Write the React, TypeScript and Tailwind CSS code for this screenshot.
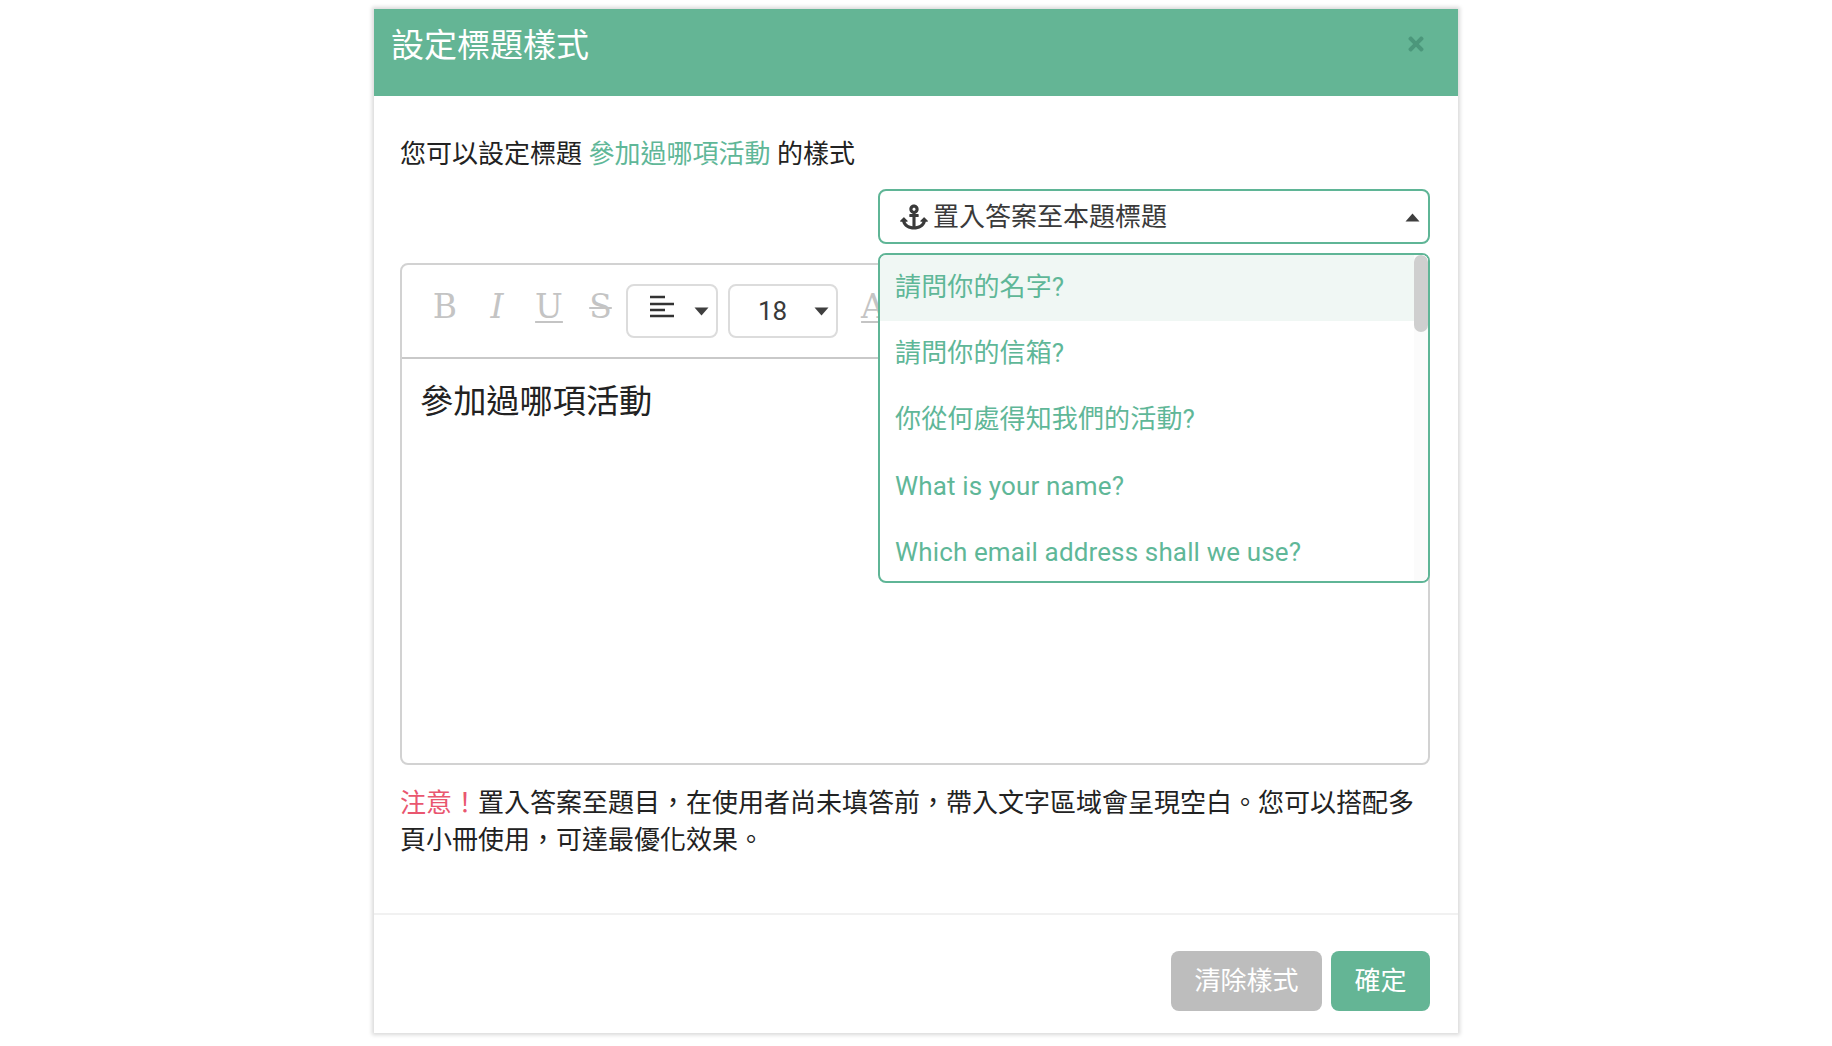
import { FaAnchor, FaTimes } from 'react-icons/fa';

const fontStack = "font-['Roboto','Noto_Sans_CJK_TC',sans-serif]";

const answers = [
  '請問你的名字?',
  '請問你的信箱?',
  '你從何處得知我們的活動?',
  'What is your name?',
  'Which email address shall we use?',
];

function Caret({ up = false }: { up?: boolean }) {
  return (
    <svg width="15" height="9" viewBox="0 0 15 9" className="shrink-0 text-[#3f3f3f]">
      <path d={up ? 'M7.5 0.5 L14.5 8.5 L0.5 8.5 Z' : 'M0.5 0.5 L14.5 0.5 L7.5 8.5 Z'} fill="currentColor" />
    </svg>
  );
}

function AlignLeftIcon() {
  return (
    <svg width="24" height="24" viewBox="0 0 24 24" className="mb-[10px] text-[#333]">
      <path d="M0 3h15M0 10h24M0 16h15M0 22h24" stroke="currentColor" strokeWidth="2.4" fill="none" />
    </svg>
  );
}

function Toolbar() {
  const letter = "w-[52px] flex justify-center text-[#c4c4c4] font-['DejaVu_Serif',serif] text-[33px] leading-none -mt-[10px]";
  return (
    <div className="h-[94px] shrink-0 flex items-center pl-[16px] border-b-2 border-[#c9c9c9]">
      <span className={`${letter} pl-[2px]`}>B</span>
      <span className={`${letter} pl-[2px]`}>
        <span className="italic">I</span>
      </span>
      <span className={`${letter} pl-[2px]`}>
        <span className="underline decoration-2 underline-offset-[3px]">U</span>
      </span>
      <span className={`${letter} pl-[1px]`}>
        <span className="line-through decoration-2">S</span>
      </span>
      <div className="w-[92px] h-[54px] flex items-center justify-between pl-[22px] pr-[7px] border-2 border-[#dcdcdc] rounded-lg">
        <AlignLeftIcon />
        <Caret />
      </div>
      <div className="w-[110px] h-[54px] ml-[10px] flex items-center justify-between pl-[28px] pr-[7px] border-2 border-[#dcdcdc] rounded-lg text-[26px] text-[#3a3a3a]">
        <span>18</span>
        <Caret />
      </div>
      <span className={`${letter} ml-[9px]`}>
        <span className="underline decoration-2 underline-offset-[3px]">A</span>
      </span>
    </div>
  );
}

export default function App() {
  return (
    <div className={`w-full h-[1046px] bg-white overflow-hidden pt-[9px] flex justify-center ${fontStack}`}>
      <div className="w-[1084px] h-[1024px] flex flex-col bg-white shadow-[0_0_4px_2px_#d9d9d9]">
        <div className="h-[87px] shrink-0 bg-[#64b595] flex items-start justify-between pl-[17px] pr-[31px] pt-[11px]">
          <h1 className="text-[33px] leading-[52px] font-normal text-white">設定標題樣式</h1>
          <FaTimes size={22} className="mt-[13px] text-[#4c977b]" />
        </div>

        <div className="flex-1 pl-[26px] pr-[28px] pt-[39px]">
          <p className="text-[26px] leading-[39px] text-[#222]">
            您可以設定標題 <span className="text-[#5fb798]">參加過哪項活動</span> 的樣式
          </p>

          <div className="relative z-10 w-[552px] h-[55px] mt-[15px] ml-auto flex items-center justify-between pl-[20px] pr-[8px] pt-[1px] border-2 border-[#5fb596] rounded-lg bg-white">
            <span className="flex items-center gap-[5px] text-[26px] text-[#3a3a3a]">
              <FaAnchor size={28} />
              置入答案至本題標題
            </span>
            <Caret up />
            <div className="absolute left-[-2px] right-[-2px] top-[62px] h-[330px] overflow-hidden bg-white border-2 border-[#5fb596] rounded-lg">
              {answers.map((a, i) => (
                <div
                  key={a}
                  className={`h-[66.3px] flex items-center pl-[15px] pb-[2px] text-[26px] tracking-[0.14px] text-[#5fb798] ${i === 0 ? 'bg-[#f0f7f4]' : ''}`}
                >
                  {a}
                </div>
              ))}
              <div className="absolute top-0 right-0 bottom-0 w-[14px] bg-[#fbfbfb]">
                <div className="h-[77px] rounded-full bg-[#cfcfcf]" />
              </div>
            </div>
          </div>

          <div className="h-[502px] mt-[19px] flex flex-col border-2 border-[#d2d2d2] rounded-lg">
            <Toolbar />
            <div className="pl-[18px] pt-[20px] text-[33.2px] leading-[46px] text-[#222]">參加過哪項活動</div>
          </div>

          <p className="mt-[20px] text-[26px] leading-[37px] text-[#222]">
            <span className="text-[#e9566f]">注意！</span>
            置入答案至題目，在使用者尚未填答前，帶入文字區域會呈現空白。您可以搭配多頁小冊使用，可達最優化效果。
          </p>
        </div>

        <div className="shrink-0 flex justify-end gap-[9px] border-t-2 border-[#f1f1f1] pl-[26px] pr-[28px] pt-[36px] pb-[22px]">
          <button className="w-[151px] h-[60px] rounded-lg bg-[#bdbdbd] text-[26px] text-white">清除樣式</button>
          <button className="w-[99px] h-[60px] rounded-lg bg-[#64b595] text-[26px] text-white">確定</button>
        </div>
      </div>
    </div>
  );
}
